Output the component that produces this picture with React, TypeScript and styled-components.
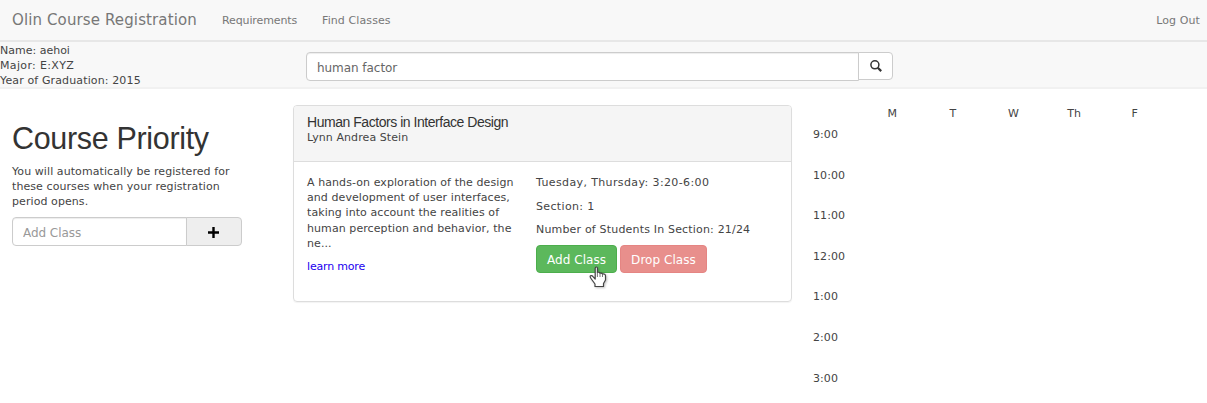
import React from 'react';
import styled, { createGlobalStyle } from 'styled-components';

const Global = createGlobalStyle`
  *, *::before, *::after { box-sizing: border-box; }
  html, body { margin: 0; background: #fff; }
  body {
    height: 403px;
    overflow: hidden;
    font-family: Verdana, "DejaVu Sans", sans-serif;
    font-size: 11px;
    line-height: 15.2px;
    letter-spacing: 0.08px;
    color: #444;
  }
  p, h1, h2 { margin: 0; font-weight: 400; }
  a { text-decoration: none; color: inherit; }
`;

const NavBar = styled.nav`
  display: flex;
  align-items: center;
  height: 42px;
  padding: 1px 7px 0 12px;
  background: #f8f8f8;
  border-bottom: 2px solid #e7e7e7;
  color: #777;
`;
const Brand = styled.a`
  width: 210px;
  padding-top: 1px;
  font-size: 15px;
  letter-spacing: 0.12px;
`;
const NavLink = styled.a<{ $width?: number }>`
  width: ${p => (p.$width ? `${p.$width}px` : 'auto')};
  white-space: nowrap;
  letter-spacing: ${p => (p.$width ? -0.12 : 0.1)}px;
  &:last-child { margin-left: auto; }
`;

const SubHeader = styled.header`
  display: flex;
  height: 47px;
  background: #f8f8f8;
  border-bottom: 2px solid #f1f1f1;
`;
const Student = styled.div`
  width: 306px;
  padding-top: 1px;
`;
const StudentLine = styled.div<{ $tracking: number }>`
  letter-spacing: ${p => p.$tracking}px;
`;
const SearchGroup = styled.form`
  display: flex;
  margin-top: 10px;
  align-items: flex-start;
`;
const Field = styled.input<{ $width: number }>`
  width: ${p => p.$width}px;
  height: 29px;
  padding: 3px 10px 0;
  border: 1px solid #ccc;
  border-radius: 4px 0 0 4px;
  background: #fff;
  box-shadow: inset 0 1px 1px rgba(0, 0, 0, 0.075);
  font-family: inherit;
  font-size: 12px;
  letter-spacing: -0.05px;
  color: #666;
  outline: none;
  &::placeholder { color: #999; opacity: 1; }
`;
const IconButton = styled.button<{ $width: number; $muted?: boolean }>`
  display: flex;
  align-items: center;
  justify-content: center;
  width: ${p => p.$width}px;
  height: ${p => (p.$muted ? 29 : 28)}px;
  margin-left: -1px;
  padding: ${p => (p.$muted ? '3px 1px 0 0' : '0')};
  border: 1px solid #ccc;
  border-radius: 0 4px 4px 0;
  background: ${p => (p.$muted ? '#eee' : '#fff')};
`;

const Main = styled.main`
  display: flex;
`;
const Sidebar = styled.aside`
  width: 293px;
  padding: 31px 0 0 12px;
`;
const Title = styled.h1`
  font-family: "Liberation Sans", Arial, sans-serif;
  font-size: 30.5px;
  line-height: 37px;
  letter-spacing: -0.33px;
  color: #333;
`;
const Note = styled.p`
  width: 232px;
  margin: 7px 0;
`;
const AddGroup = styled.div`
  display: flex;
`;

const Card = styled.section`
  width: 499px;
  height: 197px;
  margin-top: 16px;
  border: 1px solid #ddd;
  border-radius: 4px;
  box-shadow: 0 1px 1px rgba(0, 0, 0, 0.05);
`;
const CardHead = styled.header`
  height: 56px;
  padding: 8px 13px;
  background: #f5f5f5;
  border-bottom: 1px solid #ddd;
  border-radius: 3px 3px 0 0;
`;
const CourseName = styled.h2`
  font-family: "Liberation Sans", Arial, sans-serif;
  font-size: 14px;
  line-height: 16px;
  letter-spacing: -0.46px;
  color: #333;
`;
const CardBody = styled.div`
  display: flex;
  padding: 13px 13px 0;
`;
const Description = styled.div`
  width: 229px;
  white-space: nowrap;
`;
const LearnMore = styled.a`
  display: block;
  margin-top: 8px;
  letter-spacing: -0.18px;
  color: #1a00f0;
`;
const Details = styled.div`
  display: flex;
  flex-direction: column;
  gap: 8.5px;
  white-space: nowrap;
`;
const Detail = styled.p<{ $tracking: number }>`
  letter-spacing: ${p => p.$tracking}px;
`;
const Actions = styled.div`
  display: flex;
  gap: 3px;
  margin-top: -1px;
`;
const Action = styled.button<{ $tone: 'add' | 'drop' }>`
  position: relative;
  width: ${p => (p.$tone === 'add' ? 81 : 87)}px;
  height: 28px;
  padding: 1px 0 0;
  border: 1px solid ${p => (p.$tone === 'add' ? '#4cae4c' : '#e58583')};
  border-radius: 4px;
  background: ${p => (p.$tone === 'add' ? '#5cb85c' : '#e88f8c')};
  color: #fff;
  font-family: inherit;
  font-size: 12px;
  letter-spacing: 0.05px;
  white-space: nowrap;
`;
const Pointer = styled.svg`
  position: absolute;
  left: 52px;
  top: 20px;
  z-index: 1;
  filter: drop-shadow(1px 1px 1px rgba(0, 0, 0, 0.25));
`;

const Schedule = styled.div`
  display: grid;
  grid-template-columns: 49px repeat(5, 60.6px);
  grid-template-rows: 21px repeat(7, 40.6px);
  margin: 17px 0 0 21px;
`;
const Day = styled.div`
  text-align: center;
`;
const Hour = styled.div`
  grid-column: 1;
`;

const days = ['M', 'T', 'W', 'Th', 'F'];
const hours = ['9:00', '10:00', '11:00', '12:00', '1:00', '2:00', '3:00'];
const description = [
  'A hands-on exploration of the design',
  'and development of user interfaces,',
  'taking into account the realities of',
  'human perception and behavior, the',
  'ne...',
];

export default function App() {
  return (
    <>
      <Global />
      <NavBar>
        <Brand href="#">Olin Course Registration</Brand>
        <NavLink href="#" $width={100}>Requirements</NavLink>
        <NavLink href="#">Find Classes</NavLink>
        <NavLink href="#">Log Out</NavLink>
      </NavBar>
      <SubHeader>
        <Student>
          <StudentLine $tracking={0}>Name: aehoi</StudentLine>
          <StudentLine $tracking={0.35}>Major: E:XYZ</StudentLine>
          <StudentLine $tracking={0.13}>Year of Graduation: 2015</StudentLine>
        </Student>
        <SearchGroup>
          <Field $width={553} defaultValue="human factor" />
          <IconButton $width={35} type="button" aria-label="Search">
            <svg width="12" height="12" viewBox="0 0 12 12" fill="none" stroke="#333">
              <circle cx="4.9" cy="4.8" r="4" strokeWidth="1.5" />
              <path d="M7.8 7.7 11.2 11.1" strokeWidth="2.2" />
            </svg>
          </IconButton>
        </SearchGroup>
      </SubHeader>
      <Main>
        <Sidebar>
          <Title>Course Priority</Title>
          <Note>
            You will automatically be registered for<br />
            these courses when your registration<br />
            period opens.
          </Note>
          <AddGroup>
            <Field $width={175} placeholder="Add Class" />
            <IconButton $width={56} $muted type="button" aria-label="Add">
              <svg width="11" height="11" viewBox="0 0 11 11" stroke="#000" strokeWidth="2.4">
                <path d="M5.5 0V11M0 5.5H11" />
              </svg>
            </IconButton>
          </AddGroup>
        </Sidebar>
        <Card>
          <CardHead>
            <CourseName>Human Factors in Interface Design</CourseName>
            <div>Lynn Andrea Stein</div>
          </CardHead>
          <CardBody>
            <Description>
              {description.map(line => <div key={line}>{line}</div>)}
              <LearnMore href="#">learn more</LearnMore>
            </Description>
            <Details>
              <Detail $tracking={0.38}>Tuesday, Thursday: 3:20-6:00</Detail>
              <Detail $tracking={0.35}>Section: 1</Detail>
              <Detail $tracking={0.18}>Number of Students In Section: 21/24</Detail>
              <Actions>
                <Action $tone="add">
                  Add Class
                  <Pointer width="18" height="22" viewBox="0 0 18 22">
                    <path
                      d="M6.2 13V2.2Q6.2 1 7.3 1T8.4 2.2V6.5Q10.5 5.8 11 7.2Q13 6.6 13.5 8Q16.5 7.6 16.5 10V14L14.5 17.5V20.5H6V18L2 12.5Q.6 10.6 1.5 9.8Q2.8 9 4.2 10.8L6.2 13Z"
                      fill="#fff" stroke="#444" strokeWidth="1.2" strokeLinejoin="round"
                    />
                    <path d="M8.4 6V11M11 7V11M13.5 8V11" stroke="#555" strokeWidth=".8" />
                  </Pointer>
                </Action>
                <Action $tone="drop">Drop Class</Action>
              </Actions>
            </Details>
          </CardBody>
        </Card>
        <Schedule>
          <span />
          {days.map(d => <Day key={d}>{d}</Day>)}
          {hours.map(h => <Hour key={h}>{h}</Hour>)}
        </Schedule>
      </Main>
    </>
  );
}
